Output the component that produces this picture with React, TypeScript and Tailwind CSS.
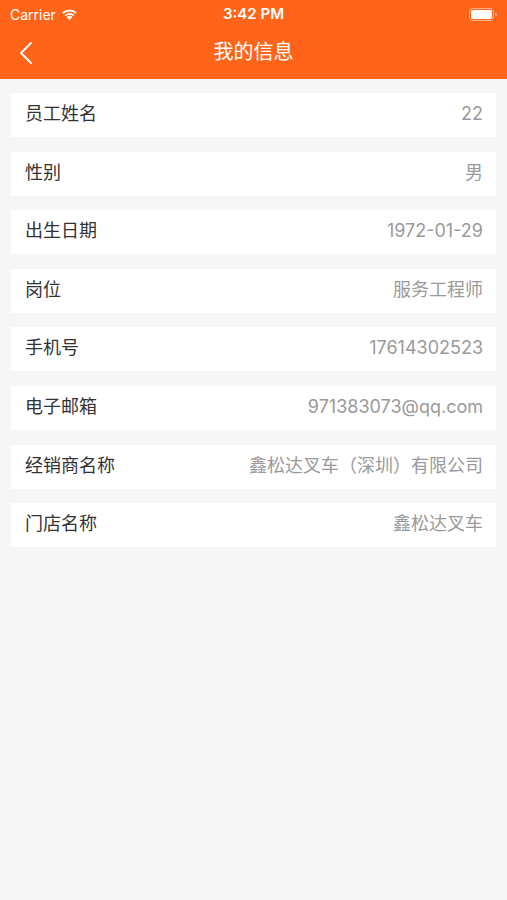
const rows: [string, string][] = [
  ['员工姓名', '22'],
  ['性别', '男'],
  ['出生日期', '1972-01-29'],
  ['岗位', '服务工程师'],
  ['手机号', '17614302523'],
  ['电子邮箱', '971383073@qq.com'],
  ['经销商名称', '鑫松达叉车（深圳）有限公司'],
  ['门店名称', '鑫松达叉车'],
];

const font = { fontFamily: 'Inter, "Noto Sans CJK SC", "Noto Sans", sans-serif' };

export default function App() {
  return (
    <div className="min-h-[900px] bg-[#f6f6f6]" style={font}>
      <header className="bg-[#ff6418] text-white">
        <div className="h-[28px] flex items-center justify-between px-[10px] relative">
          <div className="flex items-center gap-[5px] text-[14px]">
            <span>Carrier</span>
            <svg width="17" height="12" viewBox="0 0 17 12">
              <path d="M8.5 12 L5.6 8.9 A4 4 0 0 1 11.4 8.9 Z" fill="white" />
              <path d="M3.6 6.9 A7 7 0 0 1 13.4 6.9 L12.1 8.2 A5.2 5.2 0 0 0 4.9 8.2 Z" fill="white" />
              <path d="M1.2 4.5 A10.5 10.5 0 0 1 15.8 4.5 L14.5 5.8 A8.7 8.7 0 0 0 2.5 5.8 Z" fill="white" />
            </svg>
          </div>
          <span className="absolute left-1/2 -translate-x-1/2 text-[15px] font-semibold">
            3:42 PM
          </span>
          <svg width="28" height="13" viewBox="0 0 28 13">
            <rect x="0.5" y="0.5" width="24" height="12" rx="3.5" fill="none" stroke="white" strokeOpacity="0.5" />
            <rect x="2" y="2" width="21" height="9" rx="2" fill="white" />
            <path d="M26 4.5 A2 2 0 0 1 26 8.5 Z" fill="white" fillOpacity="0.5" />
          </svg>
        </div>
        <div className="h-[51px] flex items-center relative">
          <svg className="absolute left-[19px] top-[13px]" width="14" height="24" viewBox="0 0 14 24">
            <path d="M12 2 L2 12 L12 22" fill="none" stroke="white" strokeWidth="1.8" strokeLinecap="round" strokeLinejoin="round" />
          </svg>
          <h1 className="w-full text-center text-[20px] leading-none -mt-[3px]">我的信息</h1>
        </div>
      </header>
      <div className="pt-[14px] px-[11px] flex flex-col gap-[14.6px]">
        {rows.map(([label, value]) => (
          <div key={label} className="h-[44px] bg-white flex items-center justify-between pl-[14px] pr-[13px]">
            <span className="text-[18px] leading-none -mt-[2px] text-[#333333]">{label}</span>
            <span className="text-[18px] leading-none -mt-[2px] text-[#9a9a9a]">{value}</span>
          </div>
        ))}
      </div>
    </div>
  );
}
